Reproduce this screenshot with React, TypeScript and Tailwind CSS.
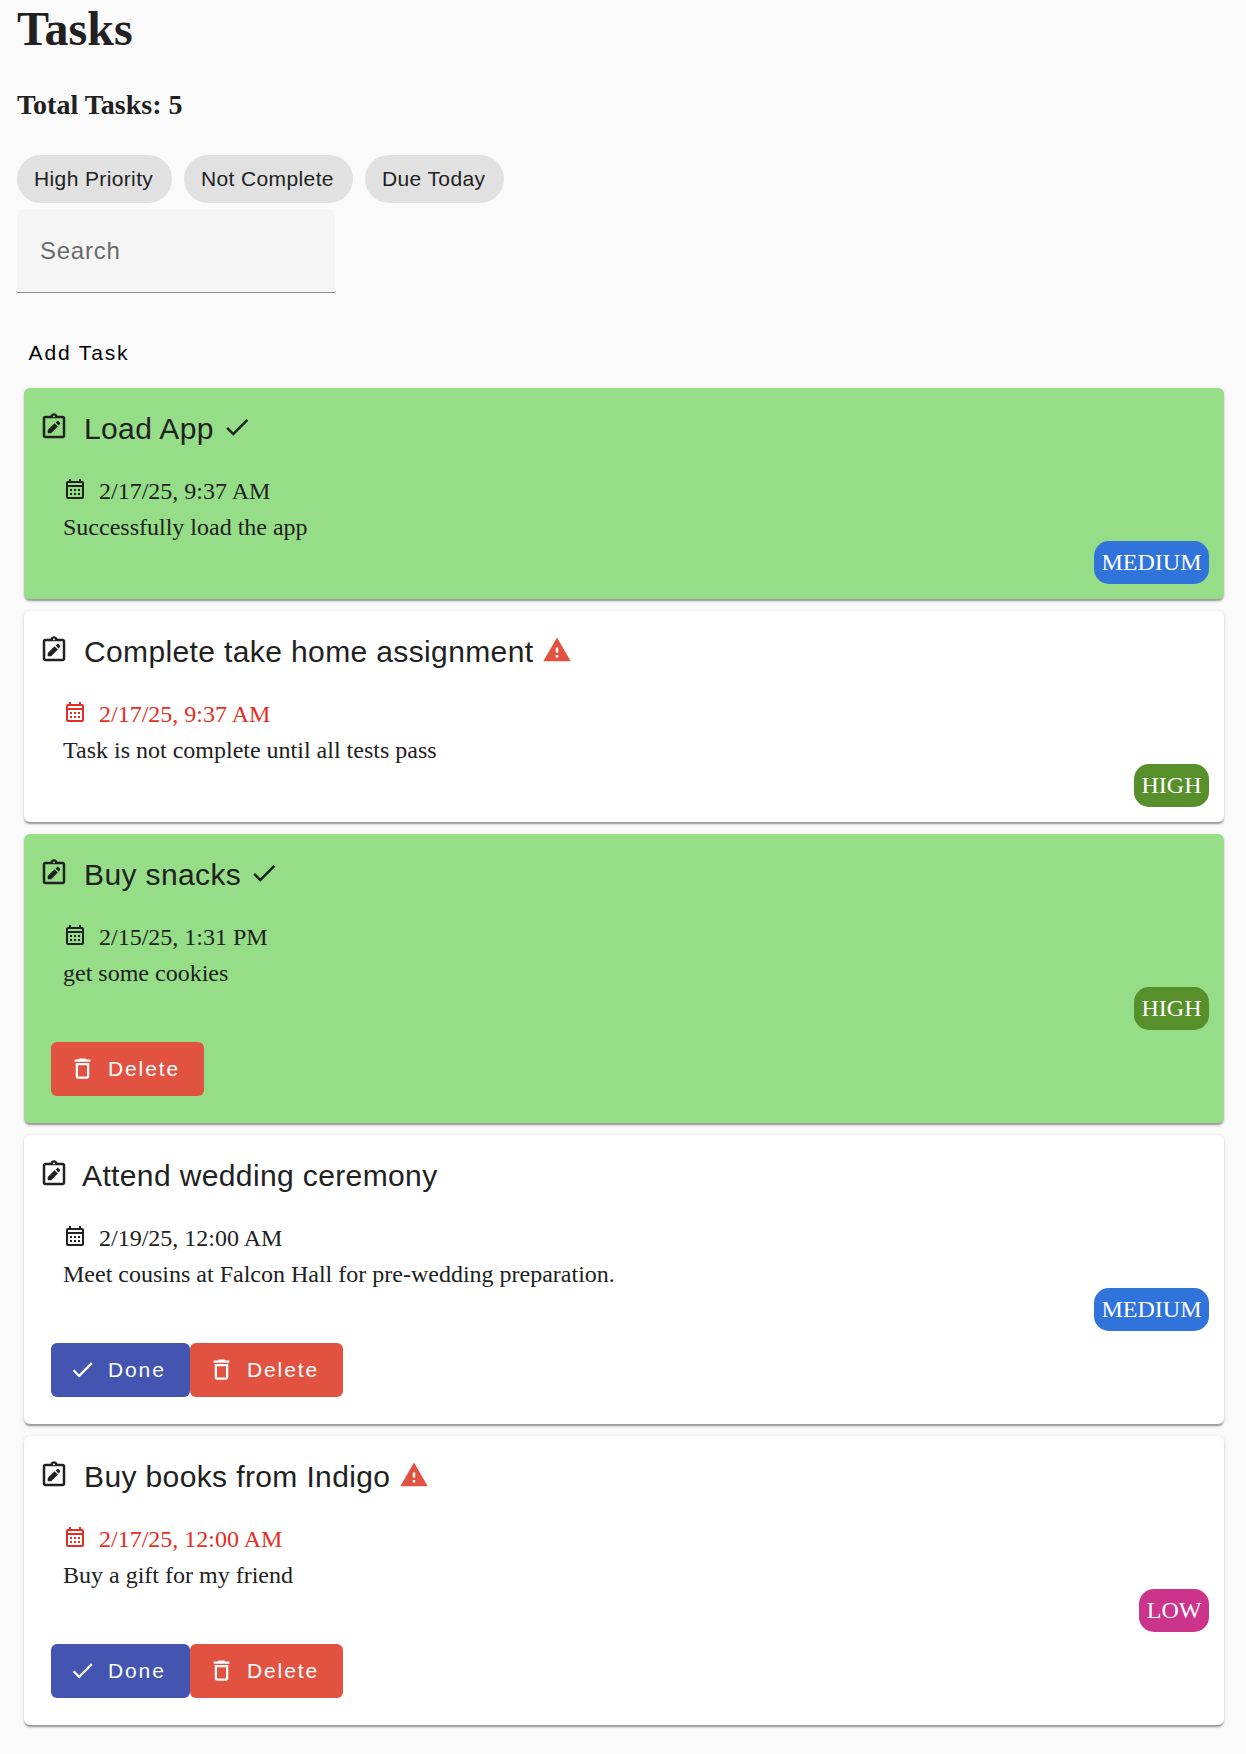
import React from "react";
import { MdCheck, MdDeleteOutline, MdOutlineCalendarMonth, MdWarning } from "react-icons/md";

type Priority = "LOW" | "MEDIUM" | "HIGH";

interface Task {
  title: string;
  date: string;
  description: string;
  priority: Priority;
  completed?: boolean;
  overdue?: boolean;
  canFinish?: boolean;
  canDelete?: boolean;
}

const tasks: Task[] = [
  { title: "Load App", date: "2/17/25, 9:37 AM", description: "Successfully load the app", priority: "MEDIUM", completed: true },
  { title: "Complete take home assignment", date: "2/17/25, 9:37 AM", description: "Task is not complete until all tests pass", priority: "HIGH", overdue: true },
  { title: "Buy snacks", date: "2/15/25, 1:31 PM", description: "get some cookies", priority: "HIGH", completed: true, canDelete: true },
  { title: "Attend wedding ceremony", date: "2/19/25, 12:00 AM", description: "Meet cousins at Falcon Hall for pre-wedding preparation.", priority: "MEDIUM", canFinish: true, canDelete: true },
  { title: "Buy books from Indigo", date: "2/17/25, 12:00 AM", description: "Buy a gift for my friend", priority: "LOW", overdue: true, canFinish: true, canDelete: true },
];

const priorityColor: Record<Priority, string> = {
  LOW: "bg-[#cc338b]",
  MEDIUM: "bg-[#3074db]",
  HIGH: "bg-[#578f2a]",
};

const sans = "font-['Liberation_Sans',Arial,sans-serif]";

function ClipboardEdit() {
  return (
    <svg viewBox="0 0 24 24" className="size-[30px] shrink-0" fill="currentColor">
      <path
        fillRule="evenodd"
        d="M19 3h-4.18C14.4 1.84 13.3 1 12 1s-2.4.84-2.82 2H5c-1.1 0-2 .9-2 2v14c0 1.1.9 2 2 2h14c1.1 0 2-.9 2-2V5c0-1.1-.9-2-2-2zm-7-.25c.41 0 .75.34.75.75s-.34.75-.75.75-.75-.34-.75-.75.34-.75.75-.75zM19 19H5V5h14v14z"
      />
      <path d="M7 14.3V17h2.7l5.4-5.4-2.7-2.7zM16.8 8.5l-1.3-1.3c-.3-.3-.7-.3-1 0l-1.2 1.2 2.3 2.3 1.2-1.2c.3-.3.3-.7 0-1z" />
    </svg>
  );
}

function TaskCard({ task }: { task: Task }) {
  return (
    <article
      className={`flex flex-col rounded-[6px] px-[15px] shadow-[0_3px_1.5px_-1.5px_rgba(0,0,0,0.2),0_1.5px_1.5px_0_rgba(0,0,0,0.14),0_1.5px_4.5px_0_rgba(0,0,0,0.12)] ${
        task.completed ? "bg-[#95dd87]" : "bg-white"
      } ${task.canDelete ? "h-[289px]" : "h-[211px]"}`}
    >
      <h2 className={`mt-px flex h-[48px] items-center pt-[32px] text-[30px] leading-[48px] tracking-[0.375px] ${sans}`}>
        <span className="mb-[5px] flex">
          <ClipboardEdit />
        </span>
        <span className={`whitespace-nowrap ${task.title.startsWith("A") ? "ml-[13px]" : "ml-[15px]"}`}>{task.title}</span>
        {task.completed && <MdCheck className="mb-[4px] ml-[8px] size-[30px]" />}
        {task.overdue && <MdWarning className="mb-[4px] ml-[9px] size-[30px] text-[#e15241]" />}
      </h2>
      <div className="mt-[36px] pl-[24px] text-[24px] leading-[36px]">
        <p className={`flex h-[36px] items-center ${task.overdue ? "text-[#e32e22]" : ""}`}>
          <MdOutlineCalendarMonth className="mb-[5px] size-[24px]" />
          <span className="ml-[12px]">{task.date}</span>
        </p>
        <p>{task.description}</p>
      </div>
      <span
        className={`-mt-[4px] flex h-[43px] shrink-0 items-center self-end rounded-[15px] px-[7.5px] pb-[2px] text-[24px] text-white ${priorityColor[task.priority]}`}
      >
        {task.priority}
      </span>
      {task.canDelete && (
        <div className={`mt-[12px] ml-[12px] flex text-[21px] tracking-[1.875px] text-white ${sans}`}>
          {task.canFinish && (
            <button className="flex h-[54px] w-[139px] items-center rounded-[6px] bg-[#4355b0] pl-[18px]">
              <MdCheck className="mb-[2px] size-[27px]" />
              <span className="ml-[12px]">Done</span>
            </button>
          )}
          <button className="flex h-[54px] w-[153px] items-center rounded-[6px] bg-[#e15241] pl-[18px]">
            <MdDeleteOutline className="mb-[2px] size-[27px]" />
            <span className="ml-[12px]">Delete</span>
          </button>
        </div>
      )}
    </article>
  );
}

export default function App() {
  return (
    <main className="h-[1754px] overflow-hidden bg-[#fafafa] px-[17px] font-['Liberation_Serif','Times_New_Roman',serif] text-[#212121]">
      <h1 className="pt-px text-[48px] leading-[55px] font-bold">Tasks</h1>
      <h3 className="mt-[33px] text-[28px] leading-[32px] font-bold">Total Tasks: 5</h3>
      <div className={`mt-[34px] flex gap-[12px] text-[21px] tracking-[0.375px] ${sans}`}>
        <span className="flex h-[48px] w-[155px] items-center rounded-full bg-[#e1e1e1] pl-[17px]">High Priority</span>
        <span className="flex h-[48px] w-[169px] items-center rounded-full bg-[#e1e1e1] pl-[17px]">Not Complete</span>
        <span className="flex h-[48px] w-[139px] items-center rounded-full bg-[#e1e1e1] pl-[17px]">Due Today</span>
      </div>
      <div
        className={`mt-[6px] flex h-[84px] w-[318px] items-center rounded-t-[6px] border-b border-[#8c8c8c] bg-[#f5f5f5] pl-[23px] text-[24px] tracking-[0.75px] text-[#6b6b6b] ${sans}`}
      >
        Search
      </div>
      <button className={`mt-[33px] ml-[11.5px] flex h-[54px] items-center text-[21px] tracking-[1.875px] text-black ${sans}`}>
        Add Task
      </button>
      <section className="mt-[8px] mr-[5px] ml-[7px] flex flex-col gap-[12px]">
        {tasks.map((task) => (
          <TaskCard key={task.title} task={task} />
        ))}
      </section>
    </main>
  );
}
